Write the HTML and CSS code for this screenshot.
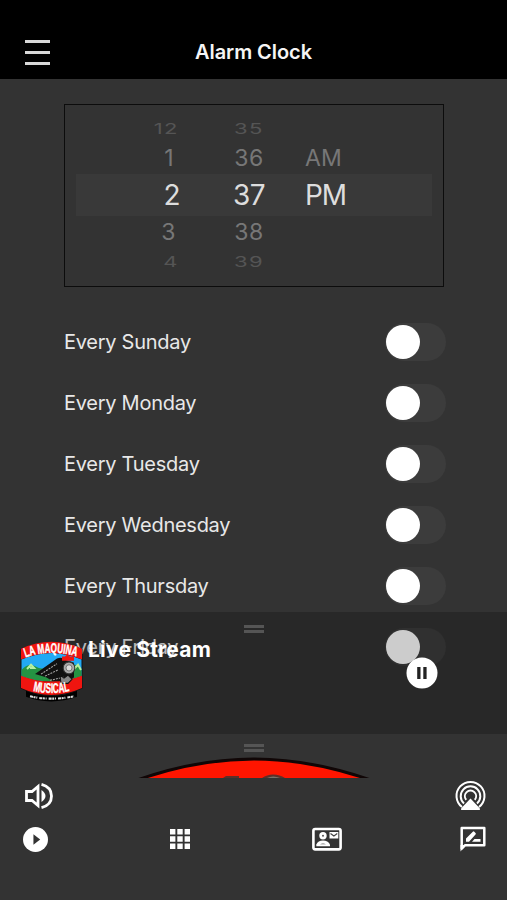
FILE: index.html
```html
<!DOCTYPE html>
<html lang="en">
<head>
<meta charset="utf-8">
<title>Alarm Clock</title>
<link rel="stylesheet" href="styles.css">
</head>
<body>
<div class="app">
  <header class="header">
    <div class="menu"><i></i><i></i><i></i></div>
    <h1 class="title">Alarm Clock</h1>
  </header>

  <main class="content">
    <section class="picker">
      <div class="wheel hours">
        <span class="far">12</span><span class="near one">1</span><span class="now">2</span><span class="near">3</span><span class="far">4</span>
      </div>
      <div class="wheel minutes">
        <span class="far">35</span><span class="near">36</span><span class="now">37</span><span class="near">38</span><span class="far">39</span>
      </div>
      <div class="wheel period">
        <span></span><span class="near">AM</span><span class="now">PM</span>
      </div>
    </section>
    <ul class="days">
      <li><span>Every Sunday</span><b class="switch"></b></li>
      <li><span>Every Monday</span><b class="switch"></b></li>
      <li><span>Every Tuesday</span><b class="switch"></b></li>
      <li><span>Every Wednesday</span><b class="switch"></b></li>
      <li><span>Every Thursday</span><b class="switch"></b></li>
      <li><span>Every Friday</span><b class="switch"></b></li>
    </ul>
  </main>

  <section class="player">
    <div class="grip"></div>
    <div class="track">
      <svg class="logo" viewBox="10 12 63 59" preserveAspectRatio="none">
        <path d="M16 60Q41 70 67 60V66Q41 75 16 66Z" fill="#000"/>
        <path d="M10.500 20Q41 6 72.500 20V58Q41 72 10.500 58Z" fill="#111"/>
        <path d="M11.500 30Q41 17 71.500 30V46Q41 56 11.500 46Z" fill="#22a9f5"/>
        <path d="M11.500 40Q18 33 24 36Q32 41 42 38Q52 40 60 37Q66 32 71.500 40V46Q41 56 11.500 46Z" fill="#259343"/>
        <path d="M17 39L21 35L24 38L20 38M64 39L68 35L71 40" fill="none" stroke="#b6f0a0" stroke-width="2"/>
        <path d="M25 44L47 29Q52 27 54 30L64 33V47L58 52L43 51L36 47Z" fill="#111"/>
        <path d="M31 44L47 34M35 46L48 40M40 50L54 47" stroke="#aaa" stroke-width="1" stroke-dasharray="2 1"/>
        <circle cx="59" cy="38" r="5.800" fill="#aaa" stroke="#333"/>
        <circle cx="59" cy="38" r="3" fill="#ddd" stroke="#555" stroke-width=".7"/>
        <path d="M11 19.500Q41 6 72 19.500V30Q41 17 11 30Z" fill="#f01510"/>
        <path d="M52 31V27H55L57 25L60 27H64V31Z" fill="#f01510"/>
        <path d="M11 45.500Q41 57 72 45.500V57.500Q41 71 11 57.500Z" fill="#f01510"/>
        <path d="M50 45L54 48L58 45L62 49L58 53H51Z" fill="#888" stroke="#111"/>
        <path id="arcTop" d="M15.500 28Q41 18.500 70 28" fill="none"/>
        <path id="arcMid" d="M22 60Q41 64.500 61 60" fill="none"/>
        <text class="brand"><textPath href="#arcTop" textLength="52" lengthAdjust="spacingAndGlyphs" startOffset="0">LA MAQUINA</textPath></text>
        <text class="brand mid"><textPath href="#arcMid" textLength="37" lengthAdjust="spacingAndGlyphs" startOffset="1">MUSICAL</textPath></text>
        <path d="M20 65.500Q41 70 64 65.500" fill="none" stroke="#ddd" stroke-width="2" stroke-dasharray="3 .6 2 .8 1 2"/>
      </svg>
      <strong class="track-title">Live Stream</strong>
      <svg class="pause" viewBox="0 0 32 32"><circle cx="16" cy="16" r="15.500" fill="#fff"/><path d="M11.200 10h3.300v12h-3.300zM17.300 10h3.300v12h-3.300z" fill="#222"/></svg>
    </div>
  </section>

  <footer class="dock">
    <div class="grip"></div>
    <svg class="artwork" viewBox="0 0 270 21">
      <path d="M10 26Q74 2 135 2Q195 2 260 26Z" fill="#ff1500" stroke="#100606" stroke-width="3"/>
      <path d="M104 21L107 19H120V21ZM143 21Q148 17.500 154 17.500Q161 17.500 166 21Z" fill="#5c3029"/>
      <path d="M148 21Q154 18 161 21Z" fill="#77736a"/>
    </svg>
    <div class="row sound">
      <svg class="icon volume" viewBox="0 0 30 28" fill="none" stroke="#fff" stroke-width="2.800">
        <path d="M2.500 9.500H8L14 4.500V23.500L8 18.500H2.500Z"/><path d="M17.500 8Q21.500 11 21.500 14T17.500 20Z" fill="#fff" stroke-width="0"/><path d="M17.500 2.300Q27.500 5 27.500 14T17.500 25.700"/>
      </svg>
      <svg class="icon airplay" viewBox="0 0 30 30">
        <g fill="none" stroke="#fff" stroke-width="2"><path d="M6.500 26A14 14 0 1 1 23.500 26"/><path d="M8.500 22.500A9.800 9.800 0 1 1 21.500 22.500"/><path d="M10.700 18.800A5.600 5.600 0 1 1 19.300 18.800"/></g>
        <path d="M15 17.500L24 27Q25.500 29 23 29H7Q4.500 29 6 27Z" fill="#fff"/>
      </svg>
    </div>
    <nav class="row tabs">
      <svg class="icon play" viewBox="0 0 24 24"><circle cx="12" cy="12" r="12" fill="#fff"/><path d="M10 7L16.500 12L10 17Z" fill="#333"/></svg>
      <svg class="icon apps" viewBox="0 0 20 20" fill="#fff"><path d="M0 0h5.400v5.400H0zM7.300 0h5.400v5.400H7.300zM14.600 0H20v5.400h-5.400zM0 7.300h5.400v5.400H0zM7.300 7.300h5.400v5.400H7.300zM14.600 7.300H20v5.400h-5.400zM0 14.600h5.400V20H0zM7.300 14.600h5.400V20H7.300zM14.600 14.600H20V20h-5.400z"/></svg>
      <svg class="icon contact" viewBox="0 0 30 24"><rect x="1.400" y="2" width="27.200" height="20.400" rx="1.800" fill="none" stroke="#fff" stroke-width="2.600"/><circle cx="11" cy="8.800" r="3.700" fill="#fff"/><circle cx="11" cy="8.800" r="1" fill="#555"/><path d="M4.300 19.200V17.500Q6 13.600 11 13.600T18 17.500V19.200Z" fill="#fff"/><path d="M8 17.300Q11 15.500 14 17.300Z" fill="#555"/><path d="M17.500 5H26.300V11.500H17.500Z" fill="#fff"/><path d="M18.500 6.500L21.900 9L25.300 6.500" fill="none" stroke="#444" stroke-width="1.200"/></svg>
      <svg class="icon review" viewBox="0 0 26 26"><path d="M1.700 22.500V2H24.300V19.200H5.200Z" fill="none" stroke="#fff" stroke-width="2.500" stroke-linejoin="round"/><path d="M.5 19H6L.5 25.500Z" fill="#fff"/><path d="M6 15.700V12.500L12.800 5.700Q13.500 5 14.300 5.700L15.500 7Q16.300 7.800 15.500 8.600L9 15.700ZM12 15.700L14.500 13H20.500V15.700Z" fill="#fff"/></svg>
    </nav>
  </footer>
</div>
</body>
</html>
```
FILE: styles.css
```css
* { box-sizing: border-box; }
body { margin: 0; background: #333; color: #e8e8e8; font-family: Inter, "Liberation Sans", sans-serif; }
.app { position: relative; height: 900px; overflow: hidden; display: flex; flex-direction: column; }
.header { height: 79px; flex: none; background: #000; display: grid; grid-template-columns: 1fr auto 1fr; align-items: center; padding: 25px 25px 0; }
.menu { display: flex; flex-direction: column; gap: 8px; width: 25px; }
.menu i { height: 3px; background: #d8d8d8; }
.title { margin: 0; font-size: 20px; font-weight: 600; letter-spacing: -.05px; line-height: 24px; color: #f5f5f5; }
.content { height: 655px; flex: none; padding: 25px 61px 0 64px; overflow: hidden; }
.picker { width: 380px; height: 183px; border: 1.500px solid #0c0c0c; padding: 13px 0 0 11px; display: grid; grid-template-columns: 104px 138px 115px; background: linear-gradient(#393939, #393939) 11px 69px / 356px 42px no-repeat; }
.wheel { display: grid; grid-template-rows: 20px 40px 34px 40px 18px; align-items: center; justify-items: center; }
.hours { justify-items: end; }
.period { justify-items: start; margin-left: -13px; }
.near { font-size: 23px; color: #777; line-height: 28px; letter-spacing: .5px; }
.now { font-size: 28px; color: #ddd; line-height: 34px; letter-spacing: -.5px; }
.far { font-size: 22px; color: #555; line-height: 20px; letter-spacing: 1.500px; position: relative; top: 1px; transform: scaleY(.65); }
.hours .near { margin-right: 4px; }
.hours .one { margin-right: 6px; }
.hours .far { margin-right: 1px; }
.period .near { letter-spacing: .2px; }
.period .now { letter-spacing: -1.200px; }
.days { list-style: none; margin: 24.500px 0 0; padding: 0; }
.days li { height: 61px; display: flex; align-items: center; justify-content: space-between; font-size: 20px; letter-spacing: -.27px; }
.switch { width: 61px; height: 38px; border-radius: 19px; background: #3c3c3c; display: flex; align-items: center; padding-left: 1px; margin-right: 0; }
.switch::before { content: ""; width: 34px; height: 34px; border-radius: 50%; background: #fff; }
.player { position: absolute; left: 0; right: 0; top: 612px; height: 122px; background: rgba(0, 0, 0, .2); padding-top: 13px; }
.grip { width: 20px; height: 8px; margin: 0 auto; border: solid #555; border-width: 3px 0; }
.track { display: flex; align-items: flex-start; padding: 9px 69px 0 20px; }
.logo { width: 63px; height: 61px; margin-top: -1px; flex: none; }
.brand { font: 900 13px "Liberation Sans", sans-serif; fill: #fff; stroke: #fff; stroke-width: .4px; }
.mid { font-size: 13.500px; }
.track-title { margin: -5px auto 0 5px; font-size: 21px; line-height: 26px; font-weight: 700; letter-spacing: .2px; color: #fff; }
.pause { width: 32px; height: 32px; margin-top: 15px; }
.dock { height: 166px; flex: none; background: #333; padding-top: 10px; }
.artwork { display: block; width: 270px; height: 21px; margin: 5px auto 0; }
.row { display: flex; justify-content: space-between; align-items: center; }
.sound { padding: 0 21px 0 24px; height: 33px; margin-top: 1px; }
.tabs { padding: 0 21px 0 23px; height: 34px; margin-top: 10px; }
.icon { display: block; overflow: visible; }
.volume { width: 30px; height: 28px; }
.airplay { width: 31px; height: 30px; }
.play { width: 25px; height: 25px; }
.apps { width: 20px; height: 20px; margin-left: 4px; }
.contact { width: 30px; height: 24px; margin-left: 3px; }
.review { width: 26px; height: 26px; }
```
